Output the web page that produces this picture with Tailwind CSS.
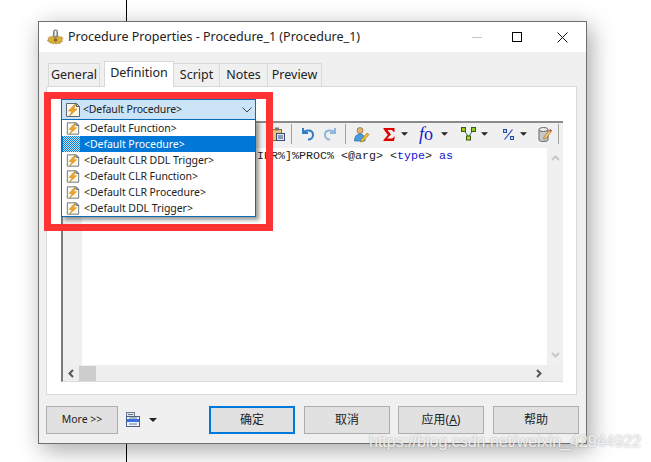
<!DOCTYPE html>
<html><head><meta charset="utf-8">
<script src="https://cdn.jsdelivr.net/npm/@tailwindcss/browser@4"></script>
</head>
<body>
<svg width="0" height="0" class="absolute">
<defs>
<symbol id="doc" viewBox="0 0 16 16">
<path d="M1.500 1.500h10l3 3v10h-13z" fill="#fbf8ea" stroke="#5f6673"/>
<path d="M11.500 1.500v3h3z" fill="#c9ced8" stroke="#5f6673"/>
<path d="M9.500 2.500 3.500 9h3.500L4.500 14 12 7H8.500L11 2.500z" fill="#f2a51e" stroke="#b9701a" stroke-width=".5"/>
</symbol>
<pattern id="chk" width="2" height="2" patternUnits="userSpaceOnUse"><rect width="2" height="2" fill="#0078d7"/><rect width="1" height="1" fill="#cfe4f7"/><rect x="1" y="1" width="1" height="1" fill="#cfe4f7"/></pattern>
<symbol id="arr" viewBox="0 0 8 4"><path d="M0 0h8L4 4z" fill="#222"/></symbol>
</defs>
</svg>
<div class="relative w-[651px] h-[462px] bg-white overflow-hidden font-['Noto_Sans',sans-serif] text-[12px] text-[#111]">
  <div class="absolute left-[126px] top-0 w-px h-full bg-black"></div>

  <div class="absolute left-[38px] top-[21px] w-[549px] h-[423px] flex flex-col border border-[#6f6f6f] bg-[#f0f0f0] shadow-[4px_6px_22px_rgba(0,0,0,0.35)]">
    <!-- title bar -->
    <div class="h-[30px] bg-white flex items-center shrink-0">
      <svg class="ml-[8px] w-[17px] h-[16px]" viewBox="0 0 17 16"><path d="M1 9.500 3 7.500l1 1L6 6.500 8.500 8 11 6.500l2 2 1-1 2 2-1.500 1.500 1 1.500-2 .5-.5 1.500-2-.5L9 15l-1.500-1-1.500 1-1-1.500-2 .5-.5-1.500-2-.5 1-1.500z" fill="#dcae3c" stroke="#a37f2a" stroke-width=".7"/><circle cx="8.500" cy="11" r="1.800" fill="#8a6a22"/><rect x="6.500" y="1" width="4" height="7" rx="1.500" fill="#b4b8bd" stroke="#5e6268" stroke-width=".8"/><rect x="8" y="2" width="1" height="5" fill="#eef0f2"/></svg>
      <span class="ml-[4px] text-[12.5px] text-[#222] whitespace-nowrap">Procedure Properties - Procedure_1 (Procedure_1)</span>
      <div class="ml-auto flex items-center mr-[18px]">
        <div class="w-[10px] h-px bg-[#c4c4c4]"></div>
        <div class="ml-[30px] w-[10px] h-[10px] border border-black"></div>
        <svg class="ml-[35px] w-[11px] h-[11px]" viewBox="0 0 11 11"><path d="M.5.5l10 10M10.500.5l-10 10" stroke="#111" fill="none"/></svg>
      </div>
    </div>
    <!-- tabs -->
    <div class="h-[34px] shrink-0 flex items-end pl-[9px] relative z-10 text-[12.5px] text-[#222]">
      <div class="w-[52px] h-[23px] border border-b-0 border-[#d9d9d9] flex items-center justify-center">General</div>
      <div class="w-[4px]"></div>
      <div class="w-[70px] h-[26px] -mb-px bg-white border border-b-0 border-[#d9d9d9] flex items-start pt-[2px] justify-center">Definition</div>
      <div class="w-[46px] h-[23px] border border-l-0 border-b-0 border-[#d9d9d9] flex items-center justify-center">Script</div>
      <div class="w-[48px] h-[23px] border border-l-0 border-b-0 border-[#d9d9d9] flex items-center justify-center">Notes</div>
      <div class="w-[54px] h-[23px] border border-l-0 border-b-0 border-[#d9d9d9] flex items-center justify-center">Preview</div>
    </div>
    <!-- pane -->
    <div class="relative ml-[7px] w-[531px] h-[309px] shrink-0 bg-white border border-[#d9d9d9] pt-[12px] pl-[14px]">
      <!-- combo -->
      <div class="w-[195px] h-[20px] bg-[#cce4f7] border border-[#0a6cb4] border-b-0 flex items-center text-[10.5px] text-[#222] tracking-[-0.15px]">
        <svg class="ml-[3px] w-[16px] h-[16px]"><use href="#doc"/></svg>
        <span class="ml-[2px]">&lt;Default Procedure&gt;</span>
        <svg class="ml-auto mr-[3px] w-[10px] h-[6px]" viewBox="0 0 10 6"><path d="M.5.5 5 5 9.500.5" fill="none" stroke="#444"/></svg>
      </div>
      <!-- editor -->
      <div class="mt-[2px] w-[502px] h-[261px] border-l-2 border-t-2 border-b border-b-[#dcdcdc] border-l-[#7a7a7a] border-t-[#8a8a8a] bg-[#f0f0f0] flex flex-col">
        <div class="h-[25px] shrink-0 flex items-center relative">
          <div class="flex items-center absolute left-[208px] top-[1px] h-[20px]">
            <svg class="w-[15px] h-[16px]" viewBox="0 0 15 16"><rect x="1.500" y="3.500" width="9" height="11" fill="#e8c878" stroke="#8a6a30"/><rect x="4" y="1.500" width="4" height="3" fill="#777"/><rect x="5.500" y="7.500" width="8" height="7" fill="#dfe6f2" stroke="#3a4a78"/><path d="M7 10h5M7 12h5" stroke="#3a4a78"/></svg>
            <div class="ml-[5px] w-px h-[20px] bg-[#a0a0a0]"></div>
            <svg class="ml-[9px] w-[14px] h-[14px]" viewBox="0 0 14 14"><path d="M2 1v5h5" fill="none" stroke="#2f7fc8" stroke-width="2"/><path d="M2.500 5.500C5 2.500 12 2.500 12 8c0 2.500-2 4.500-5 4.500" fill="none" stroke="#2f7fc8" stroke-width="2"/></svg>
            <svg class="ml-[8px] w-[14px] h-[14px]" viewBox="0 0 14 14"><path d="M12 1v5H7" fill="none" stroke="#8db6dc" stroke-width="2"/><path d="M11.500 5.500C9 2.500 2 2.500 2 8c0 2.500 2 4.500 5 4.500" fill="none" stroke="#8db6dc" stroke-width="2"/></svg>
            <div class="ml-[8px] w-px h-[20px] bg-[#a0a0a0]"></div>
            <svg class="ml-[7px] w-[17px] h-[17px]" viewBox="0 0 17 17"><circle cx="7" cy="4.500" r="3" fill="#e2b27a" stroke="#8a6030" stroke-width=".7"/><path d="M1.500 15c0-4.500 2-7 5.500-7s5 2.500 5 7z" fill="#4a9ae0" stroke="#2a6aa8" stroke-width=".7"/><path d="M8 14l6-7 2 1.500-6 7-2.500.5z" fill="#f0c030" stroke="#907010" stroke-width=".6"/></svg>
            <svg class="ml-[13px] w-[12px] h-[13px]" viewBox="0 0 12 13"><path d="M.5 0H11.500V4H10.500C10 2.500 9 2 7.500 2H4.500L8 6.500 4 10.500H8C9.500 10.500 10.500 10 11 8.500H11.800L11 13H.5V12L4.800 7 .5 1z" fill="#e00000"/></svg>
            <svg class="ml-[6px] w-[7px] h-[4px]"><use href="#arr"/></svg>
            <span class="ml-[11px] w-[16px] font-['Liberation_Serif',serif] text-[18px] leading-none text-[#1a20c8] whitespace-nowrap"><i>f</i>o</span>
            <svg class="ml-[6px] w-[7px] h-[4px]"><use href="#arr"/></svg>
            <svg class="ml-[13px] w-[15px] h-[14px]" viewBox="0 0 15 14"><path d="M3 3l4.500 7L12 3" fill="none" stroke="#2a7a6a"/><rect x=".5" y=".5" width="4" height="4" fill="#98c818" stroke="#306010"/><rect x="10.500" y=".5" width="4" height="4" fill="#98c818" stroke="#306010"/><rect x="5.500" y="9" width="4" height="4" fill="#d8c820" stroke="#306010"/></svg>
            <svg class="ml-[5px] w-[7px] h-[4px]"><use href="#arr"/></svg>
            <svg class="ml-[15px] w-[11px] h-[11px]" viewBox="0 0 11 11"><path d="M9.500.5 1.500 10.500" stroke="#2a4ab0" stroke-width="1.200"/><rect x=".5" y=".5" width="3" height="3" fill="#bcd4f4" stroke="#2a4ab0"/><rect x="7.500" y="7.500" width="3" height="3" fill="#bcd4f4" stroke="#2a4ab0"/></svg>
            <svg class="ml-[6px] w-[7px] h-[4px]"><use href="#arr"/></svg>
            <svg class="ml-[10px] w-[16px] h-[17px]" viewBox="0 0 16 17"><path d="M2 3.500v10.500c0 2 9 2 9 0V3.500z" fill="#c8c8c8" stroke="#666"/><ellipse cx="6.500" cy="3.500" rx="4.500" ry="2" fill="#eee" stroke="#666"/><path d="M7 11l5-6.500 2 1.500-5 6.500-2.500.5z" fill="#f0c878" stroke="#8a6020" stroke-width=".6"/><path d="M12 4.500l1.200-1.500 2 1.500L14 6z" fill="#d05050"/></svg>
            <div class="ml-[5px] w-px h-[20px] bg-[#a0a0a0]"></div>
          </div>
        </div>
        <div class="flex-1 flex min-h-0">
          <div class="w-[19px] bg-[#efefef] shrink-0"></div>
          <div class="flex-1 bg-white font-['Liberation_Mono',monospace] text-[11.67px] leading-[16px] pl-[175px] whitespace-nowrap overflow-hidden text-[#222]">IER%]%PROC% &lt;@arg&gt; &lt;<span class="text-[#1414d0]">type</span>&gt; <span class="text-[#1414d0]">as</span></div>
          <div class="w-[16px] shrink-0 bg-[#f0f0f0] flex flex-col items-center justify-between py-[7px]">
            <svg class="w-[9px] h-[6px]" viewBox="0 0 9 6"><path d="M1 5l3.500-3.500L8 5" fill="none" stroke="#c8c8c8" stroke-width="2"/></svg>
            <svg class="w-[9px] h-[6px]" viewBox="0 0 9 6"><path d="M1 1l3.500 3.500L8 1" fill="none" stroke="#c8c8c8" stroke-width="2"/></svg>
          </div>
        </div>
        <div class="h-[16px] shrink-0 bg-[#eeeeee] flex items-center">
          <svg class="ml-[5px] w-[6px] h-[9px]" viewBox="0 0 6 9"><path d="M5 1 1.500 4.500 5 8" fill="none" stroke="#555" stroke-width="2"/></svg>
          <div class="ml-[5px] w-[17px] h-[15px] bg-[#cdcdcd]"></div>
          <svg class="ml-auto mr-[21px] w-[6px] h-[9px]" viewBox="0 0 6 9"><path d="M1 1l3.500 3.500L1 8" fill="none" stroke="#555" stroke-width="2"/></svg>
        </div>
      </div>
      <!-- dropdown list -->
      <div class="absolute left-[14px] top-[32px] w-[195px] h-[98px] bg-white border border-[#0a6cb4] shadow-[3px_3px_4px_rgba(0,0,0,0.4)] text-[10.5px] text-[#222] tracking-[-0.05px]">
        <div class="h-[16px] flex items-center"><svg class="ml-[4px] w-[14px] h-[15px]"><use href="#doc"/></svg><span class="ml-[4px] mt-[1px]">&lt;Default Function&gt;</span></div>
        <div class="h-[16px] flex items-center bg-[#0078d7] text-white"><svg class="ml-[1px] w-[17px] h-[16px]"><rect width="17" height="16" fill="url(#chk)"/></svg><span class="ml-[4px] mt-[1px]">&lt;Default Procedure&gt;</span></div>
        <div class="h-[16px] flex items-center"><svg class="ml-[4px] w-[14px] h-[15px]"><use href="#doc"/></svg><span class="ml-[4px] mt-[1px]">&lt;Default CLR DDL Trigger&gt;</span></div>
        <div class="h-[16px] flex items-center"><svg class="ml-[4px] w-[14px] h-[15px]"><use href="#doc"/></svg><span class="ml-[4px] mt-[1px]">&lt;Default CLR Function&gt;</span></div>
        <div class="h-[16px] flex items-center"><svg class="ml-[4px] w-[14px] h-[15px]"><use href="#doc"/></svg><span class="ml-[4px] mt-[1px]">&lt;Default CLR Procedure&gt;</span></div>
        <div class="h-[16px] flex items-center"><svg class="ml-[4px] w-[14px] h-[15px]"><use href="#doc"/></svg><span class="ml-[4px] mt-[1px]">&lt;Default DDL Trigger&gt;</span></div>
      </div>
    </div>
    <!-- footer -->
    <div class="flex-1 flex items-start pt-[11px] pl-[7px] font-['Noto_Sans','Noto_Sans_CJK_SC',sans-serif] text-[12px] text-[#222]">
      <div class="w-[72px] h-[28px] bg-[#e1e1e1] border border-[#adadad] flex items-center justify-center text-[10.5px]">More &gt;&gt;</div>
      <svg class="ml-[8px] mt-[6px] w-[14px] h-[15px]" viewBox="0 0 14 15"><rect x=".5" y=".5" width="8" height="5" fill="#dfe3ea" stroke="#6a7a90"/><path d="M2 2.500h5" stroke="#6a7a90"/><rect x=".5" y="4.500" width="13" height="10" fill="#eef2fa" stroke="#4a6080"/><rect x="1" y="7" width="12" height="3" fill="#3c6fe0"/><path d="M3 6h8M3 12h8" stroke="#6a7a90"/></svg>
      <svg class="ml-[9px] mt-[12px] w-[8px] h-[4px]"><use href="#arr"/></svg>
      <div class="ml-[52px] w-[86px] h-[28px] bg-[#e1e1e1] border-2 border-[#0078d7] flex items-center justify-center">确定</div>
      <div class="ml-[9px] w-[86px] h-[28px] bg-[#e1e1e1] border border-[#adadad] flex items-center justify-center">取消</div>
      <div class="ml-[8px] w-[86px] h-[28px] bg-[#e1e1e1] border border-[#adadad] flex items-center justify-center">应用(<span class="underline">A</span>)</div>
      <div class="ml-[9px] w-[86px] h-[28px] bg-[#e1e1e1] border border-[#adadad] flex items-center justify-center">帮助</div>
    </div>
  </div>

  <!-- red annotation -->
  <div class="absolute left-[44px] top-[92px] w-[229px] h-[139px] border-[7px] border-[#ff3333] pointer-events-none"></div>
  <!-- watermark -->
  <div class="absolute left-[369px] top-[432px] font-['Liberation_Sans',sans-serif] text-[16px] leading-[20px] text-white/80 [text-shadow:0_0_2px_rgba(120,120,120,0.7)] whitespace-nowrap">https://blog.csdn.net/weixin_42944922</div>
</div>
</body></html>
